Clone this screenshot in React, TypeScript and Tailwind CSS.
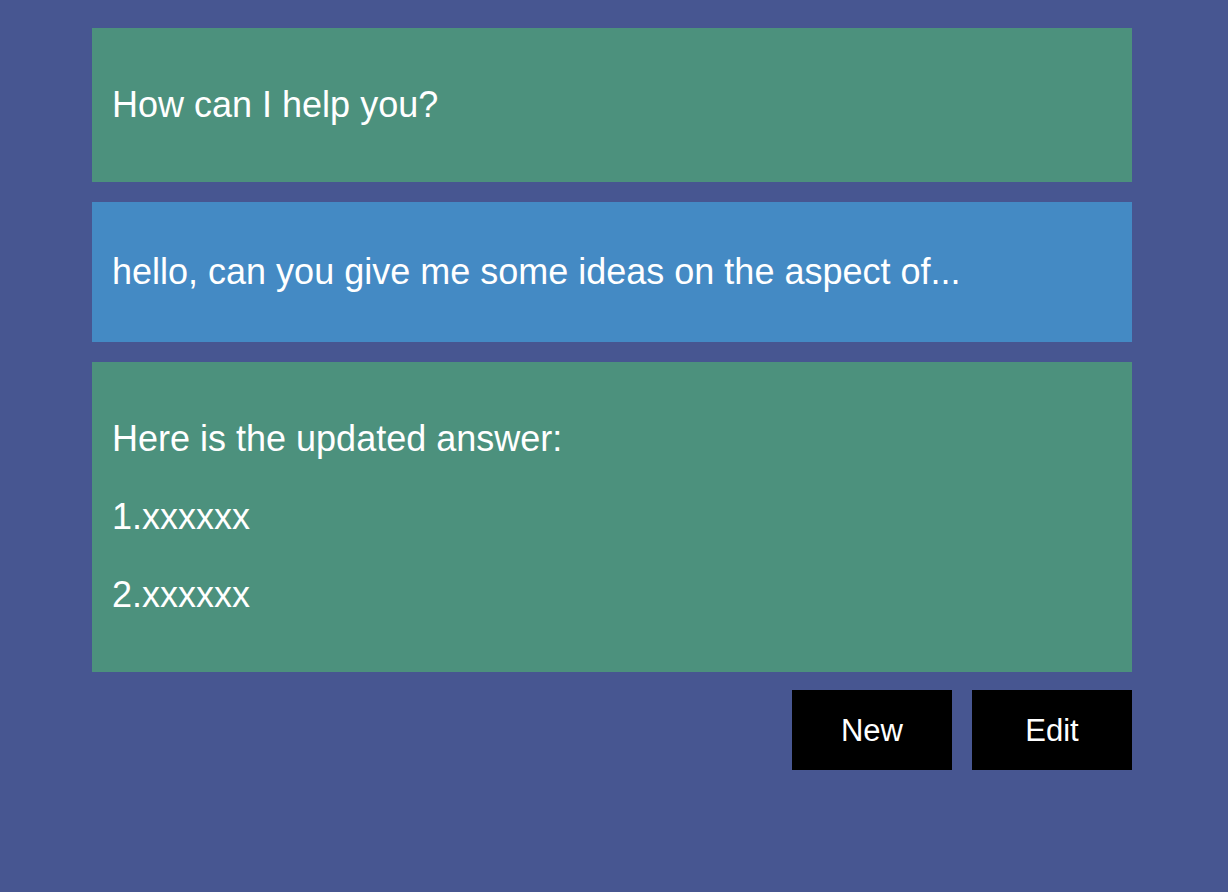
export default function App() {
  return (
    <div className="min-h-screen bg-[#475691] font-['Liberation_Sans',Arial,sans-serif] text-white">
      <div className="ml-[92px] flex w-[1040px] flex-col pt-[28px]">
        {/* assistant greeting */}
        <div className="flex h-[154px] flex-col justify-center bg-[#4c917d] px-5">
          <p className="text-[36px] leading-[42px]">How can I help you?</p>
        </div>

        {/* user message */}
        <div className="mt-5 flex h-[140px] flex-col justify-center bg-[#448ac4] px-5">
          <p className="text-[36px] leading-[42px]">hello, can you give me some ideas on the aspect of...</p>
        </div>

        {/* answer */}
        <div className="mt-5 flex h-[310px] flex-col justify-center gap-[36px] bg-[#4c917d] px-5">
          <p className="text-[36px] leading-[42px]">Here is the updated answer:</p>
          <p className="text-[36px] leading-[42px]">1.xxxxxx</p>
          <p className="text-[36px] leading-[42px]">2.xxxxxx</p>
        </div>

        <div className="mt-[18px] flex justify-end gap-5">
          <button className="h-20 w-40 bg-black pt-0.5 text-[31px]">New</button>
          <button className="h-20 w-40 bg-black pt-0.5 text-[31px]">Edit</button>
        </div>
      </div>
    </div>
  );
}
